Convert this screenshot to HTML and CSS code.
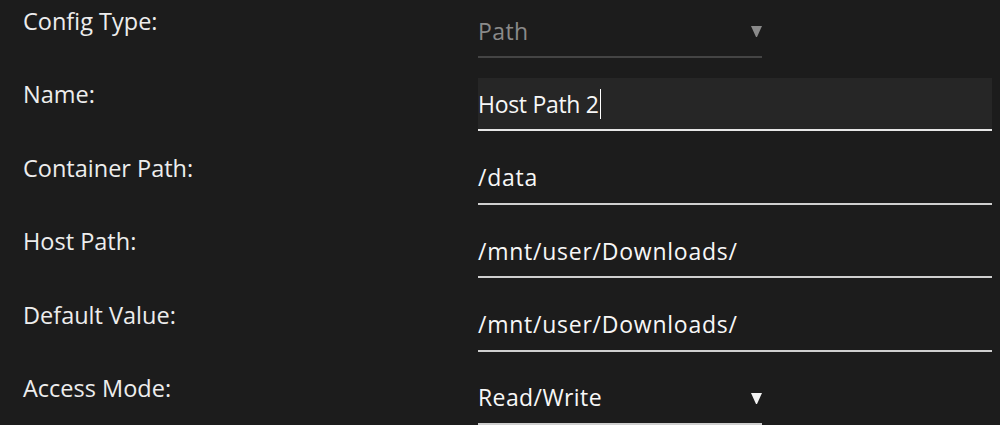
FILE: index.html
```html
<!doctype html>
<html>
    <head>
        <meta charset="utf-8" />
        <title>Add Path</title>
        <link rel="stylesheet" href="styles.css">
    </head>
<body>

    <div class="form">
        <div class="row">
            <label class="label">Config Type:</label>
            <div class="field select disabled">
                <span class="value">Path</span>
                <svg class="arrow" width="11" height="11" viewBox="0 0 11 11"><polygon points="0,0 11,0 6,11 5,11" /></svg>
            </div>
        </div>
        <div class="row">
            <label class="label">Name:</label>
            <div class="field text focus">
                <span class="value">Host Path 2</span><span class="caret"></span>
            </div>
        </div>
        <div class="row">
            <label class="label">Container Path:</label>
            <div class="field text path"><span class="value">/data</span></div>
        </div>
        <div class="row">
            <label class="label">Host Path:</label>
            <div class="field text path"><span class="value">/mnt/user/Downloads/</span></div>
        </div>
        <div class="row">
            <label class="label">Default Value:</label>
            <div class="field text path"><span class="value">/mnt/user/Downloads/</span></div>
        </div>
        <div class="row">
            <label class="label">Access Mode:</label>
            <div class="field select">
                <span class="value">Read/Write</span>
                <svg class="arrow" width="11" height="11" viewBox="0 0 11 11"><polygon points="0,0 11,0 6,11 5,11" /></svg>
            </div>
        </div>
    </div>

</body>
</html>
```

FILE: styles.css
```css
* {
    margin: 0;
    padding: 0;
    box-sizing: border-box;
}

html, body {
    background-color: #1c1c1c;
}

body {
    font-family: "Open Sans", "Noto Sans", sans-serif;
    font-size: 23px;
    color: #f0f0f0;
    overflow: hidden;
}

.form {
    padding: 5px 8px 0 23px;
}

.row {
    display: grid;
    grid-template-columns: 455px 514px;
    margin-bottom: 20.4px;
}

.label {
    font-size: 23.5px;
    line-height: 31px;
    padding-top: 1px;
    color: #ededed;
}

.field {
    display: flex;
    align-items: center;
    height: 53px;
    border-bottom: 2px solid #cfcfcf;
    color: #f7f7f7;
}

.field.path .value {
    letter-spacing: 0.75px;
}

.field.focus {
    background-color: #262626;
    border-bottom-color: #e6e6e6;
}

.field.focus .value {
    letter-spacing: -0.3px;
}

.field.select {
    width: 284px;
    justify-content: space-between;
}

.field.select .value {
    letter-spacing: 0.4px;
}

.field.select .arrow {
    fill: #f2f2f2;
    margin-top: 2px;
}

.field.disabled {
    color: #8a8a8a;
    border-bottom-color: #444;
}

.field.disabled .arrow {
    fill: #8a8a8a;
}

.caret {
    width: 1px;
    height: 30px;
    margin-left: 1px;
    background-color: #fff;
}
```
